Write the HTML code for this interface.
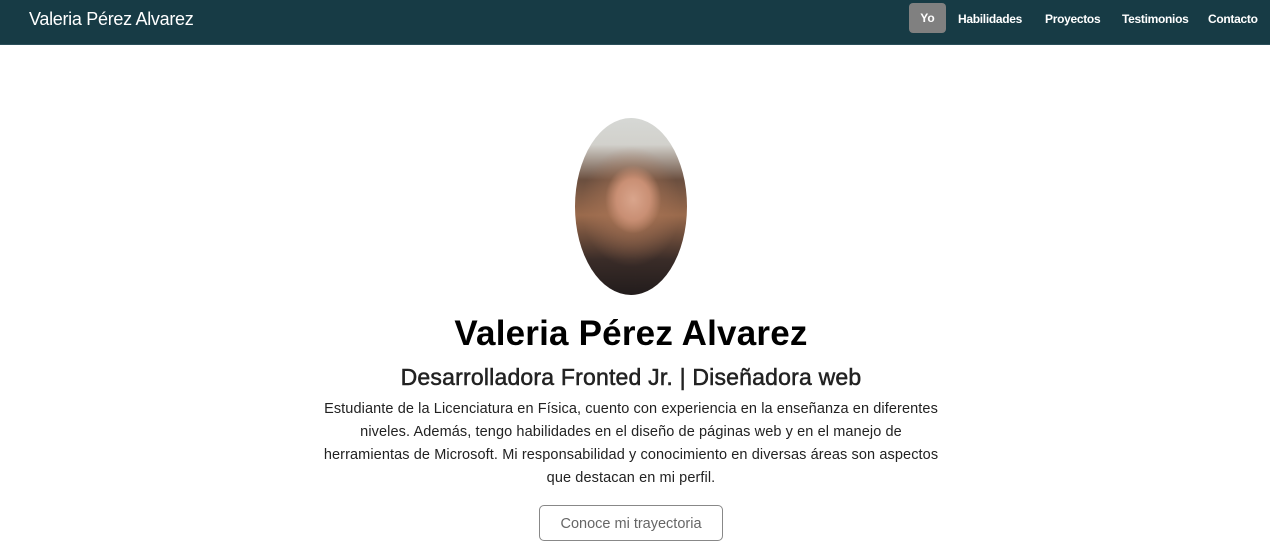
<!DOCTYPE html>
<html><head><meta charset="utf-8"><style>
body{margin:0;width:1270px;height:542px;overflow:hidden;background:#fff;font-family:"Liberation Sans",sans-serif;color:#212529}
nav{height:44px;background:#173b45;border-bottom:1px solid #2b4f5a;position:relative}
.brand{position:absolute;left:29px;top:9px;color:#fff;font-size:18px;letter-spacing:-0.3px}
.links a{position:absolute;top:12px;color:#fff;font-size:12px;font-weight:bold;text-decoration:none;letter-spacing:-0.3px}
.yo{position:absolute;left:909px;top:3px;width:37px;height:30px;background:#808080;border-radius:4px;color:#fff;font-size:12px;font-weight:bold;text-align:center;line-height:31px}
.photo{position:absolute;left:575px;top:118px;width:112px;height:177px;border-radius:50%;overflow:hidden;
background:radial-gradient(ellipse 28px 34px at 52% 46%,#d9a58c 0,#c98f74 60%,transparent 100%),radial-gradient(ellipse 50px 60px at 50% 50%,#a87456 0,transparent 100%),linear-gradient(180deg,#d6d8d5 0,#d2d1cc 15%,#6b4f3f 35%,#9a6a4c 55%,#3a2c28 80%,#221c1c 100%)}
h1{position:absolute;top:314px;left:0;width:1262px;text-align:center;margin:0;font-size:35px;font-weight:bold;color:#000;letter-spacing:0.2px}
h2{position:absolute;top:364px;left:0;width:1262px;text-align:center;margin:0;font-size:23px;font-weight:normal;color:#222;-webkit-text-stroke:0.5px #222;letter-spacing:0.2px}
p{position:absolute;top:398px;left:316px;width:630px;text-align:center;margin:0;font-size:14.5px;line-height:23px;color:#222;letter-spacing:0.1px}
.btn{position:absolute;left:539px;top:505px;width:184px;height:36px;border:1px solid #888;border-radius:5px;box-sizing:border-box;text-align:center;line-height:36px;font-size:14.5px;color:#666}
</style></head><body>
<nav><div class="brand">Valeria Pérez Alvarez</div>
<div class="yo">Yo</div>
<div class="links"><a style="left:958px">Habilidades</a><a style="left:1045px">Proyectos</a><a style="left:1122px">Testimonios</a><a style="left:1208px">Contacto</a></div></nav>
<div class="photo"></div>
<h1>Valeria Pérez Alvarez</h1>
<h2>Desarrolladora Fronted Jr. | Diseñadora web</h2>
<p>Estudiante de la Licenciatura en Física, cuento con experiencia en la enseñanza en diferentes niveles. Además, tengo habilidades en el diseño de páginas web y en el manejo de herramientas de Microsoft. Mi responsabilidad y conocimiento en diversas áreas son aspectos que destacan en mi perfil.</p>
<div class="btn">Conoce mi trayectoria</div>
</body></html>
